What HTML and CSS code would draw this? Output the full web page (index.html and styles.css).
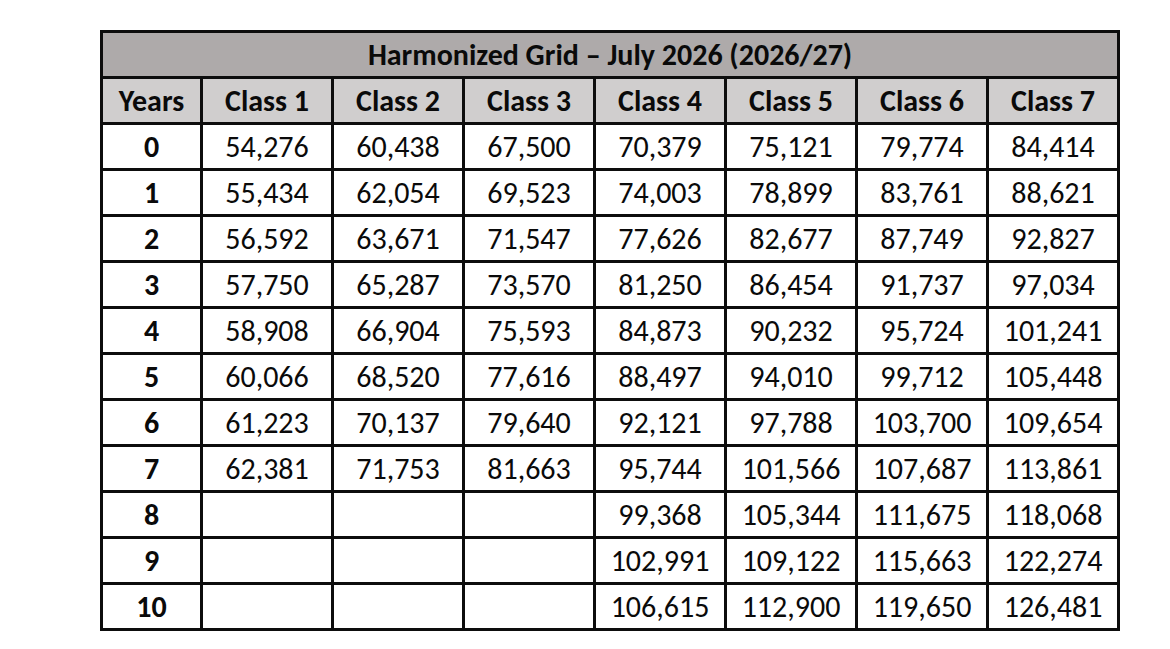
FILE: index.html
```html
<!DOCTYPE html>
<html lang="en">
<head>
<meta charset="utf-8">
<title>Harmonized Grid – July 2026 (2026/27)</title>
<link rel="stylesheet" href="styles.css">
</head>
<body>
<table class="grid">
  <colgroup>
    <col class="col-years">
    <col class="col-class"><col class="col-class"><col class="col-class"><col class="col-class">
    <col class="col-class"><col class="col-class"><col class="col-class">
  </colgroup>
  <thead>
    <tr><th class="title" colspan="8">Harmonized Grid – July 2026 (2026/27)</th></tr>
    <tr class="head">
      <th>Years</th><th>Class 1</th><th>Class 2</th><th>Class 3</th><th>Class 4</th><th>Class 5</th><th>Class 6</th><th>Class 7</th>
    </tr>
  </thead>
  <tbody>
    <tr><th>0</th><td>54,276</td><td>60,438</td><td>67,500</td><td>70,379</td><td>75,121</td><td>79,774</td><td>84,414</td></tr>
    <tr><th>1</th><td>55,434</td><td>62,054</td><td>69,523</td><td>74,003</td><td>78,899</td><td>83,761</td><td>88,621</td></tr>
    <tr><th>2</th><td>56,592</td><td>63,671</td><td>71,547</td><td>77,626</td><td>82,677</td><td>87,749</td><td>92,827</td></tr>
    <tr><th>3</th><td>57,750</td><td>65,287</td><td>73,570</td><td>81,250</td><td>86,454</td><td>91,737</td><td>97,034</td></tr>
    <tr><th>4</th><td>58,908</td><td>66,904</td><td>75,593</td><td>84,873</td><td>90,232</td><td>95,724</td><td>101,241</td></tr>
    <tr><th>5</th><td>60,066</td><td>68,520</td><td>77,616</td><td>88,497</td><td>94,010</td><td>99,712</td><td>105,448</td></tr>
    <tr><th>6</th><td>61,223</td><td>70,137</td><td>79,640</td><td>92,121</td><td>97,788</td><td>103,700</td><td>109,654</td></tr>
    <tr><th>7</th><td>62,381</td><td>71,753</td><td>81,663</td><td>95,744</td><td>101,566</td><td>107,687</td><td>113,861</td></tr>
    <tr><th>8</th><td></td><td></td><td></td><td>99,368</td><td>105,344</td><td>111,675</td><td>118,068</td></tr>
    <tr><th>9</th><td></td><td></td><td></td><td>102,991</td><td>109,122</td><td>115,663</td><td>122,274</td></tr>
    <tr><th>10</th><td></td><td></td><td></td><td>106,615</td><td>112,900</td><td>119,650</td><td>126,481</td></tr>
  </tbody>
</table>
</body>
</html>
```
FILE: styles.css
```css
html, body {
  margin: 0;
  padding: 0;
  background: #ffffff;
}

body {
  font-family: Carlito, Calibri, Lato, "Liberation Sans", sans-serif;
  color: #0a0a0a;
}

.grid {
  margin: 30px 0 0 100px;
  table-layout: fixed;
  width: 1020px;
  border-collapse: separate;
  border-spacing: 3px;
  background: #0d0d0d;
}

.col-years { width: 97px; }
.col-class { width: 128px; }

.grid th,
.grid td {
  height: 43px;
  padding: 0;
  background: #ffffff;
  text-align: center;
  vertical-align: middle;
  font-size: 30px;
  line-height: 43px;
  white-space: nowrap;
  overflow: hidden;
}

.grid td {
  font-weight: 400;
}

.grid th {
  font-weight: 700;
}

.grid .title {
  background: #aeaaaa;
  font-size: 30px;
}

.grid .head th {
  background: #d0cece;
}
```
